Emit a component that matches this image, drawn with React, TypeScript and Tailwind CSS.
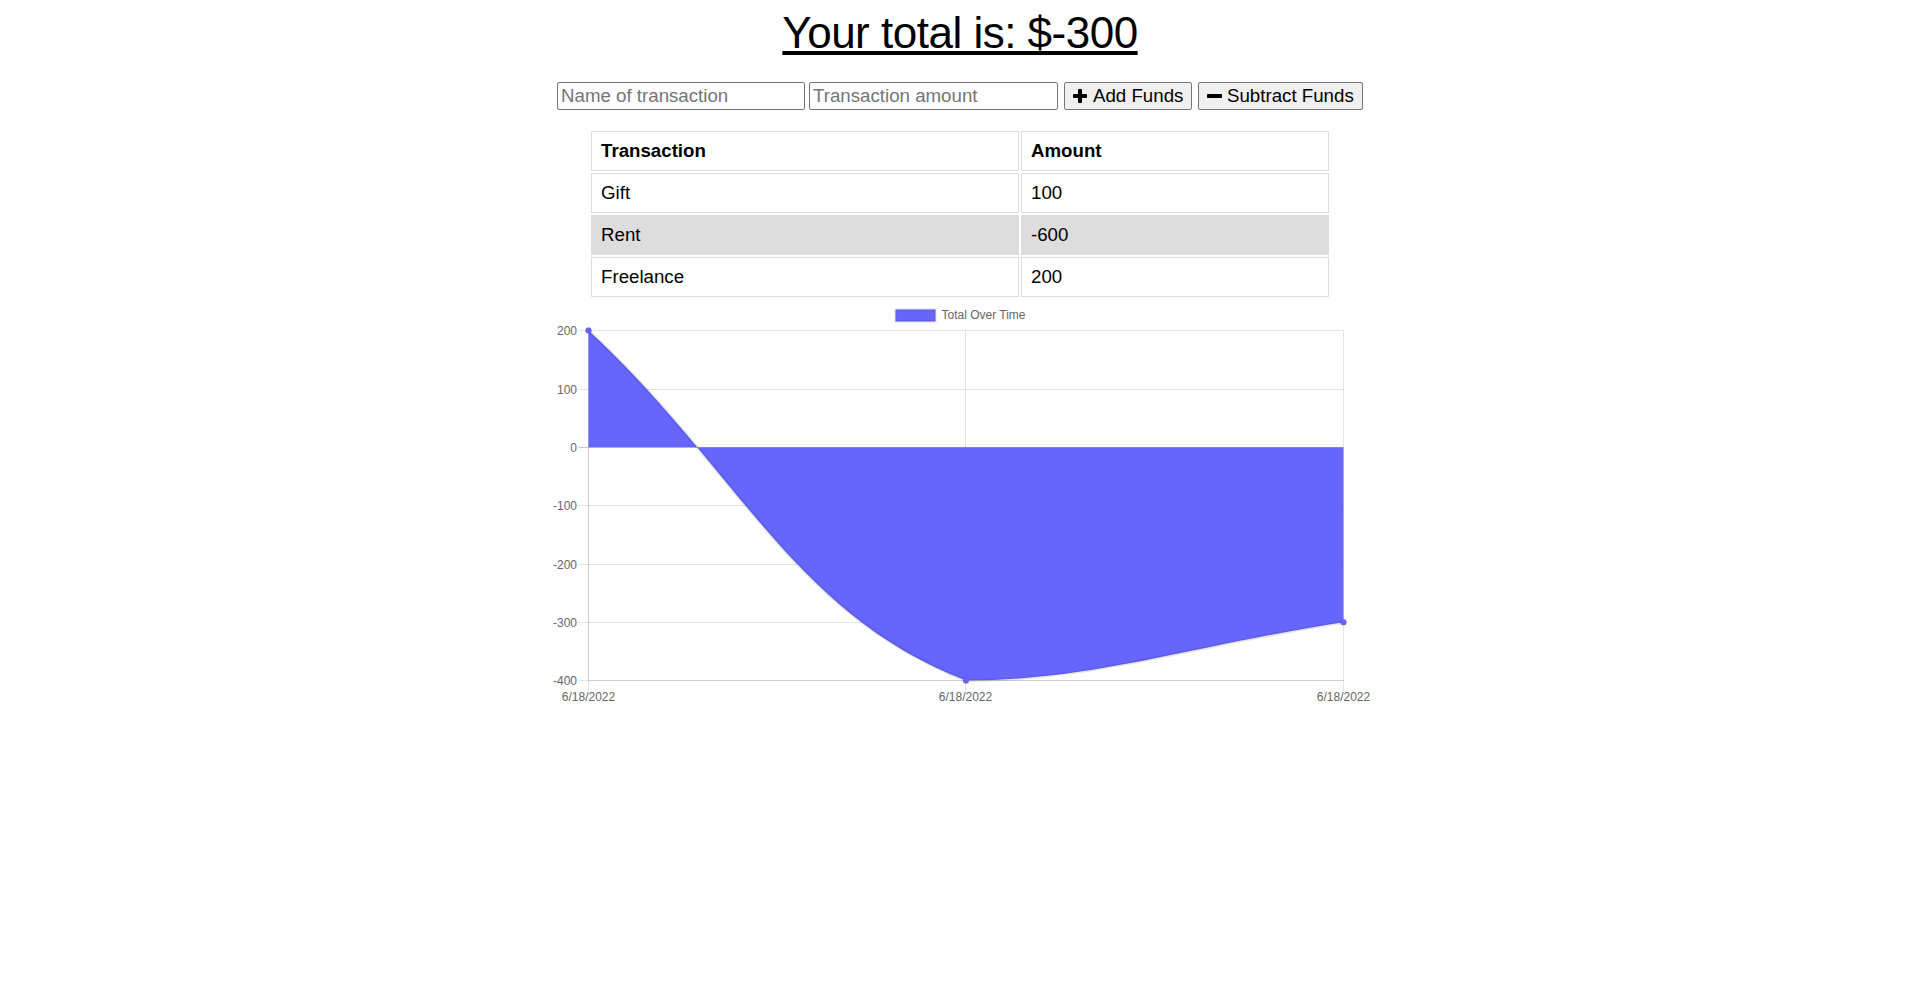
import React from "react";

const FONT = { fontFamily: '"Liberation Sans", Arial, sans-serif' };

function PlusIcon() {
  return (
    <svg width="14" height="14" viewBox="0 0 14 14" className="shrink-0">
      <rect x="5" y="0" width="4" height="14" rx="0.8" fill="#000" />
      <rect x="0" y="5" width="14" height="4" rx="0.8" fill="#000" />
    </svg>
  );
}

function MinusIcon() {
  return (
    <svg width="15" height="14" viewBox="0 0 15 14" className="shrink-0">
      <rect x="0" y="5" width="15" height="4" rx="0.8" fill="#000" />
    </svg>
  );
}

const rows = [
  { name: "Gift", amount: "100", shade: false },
  { name: "Rent", amount: "-600", shade: true },
  { name: "Freelance", amount: "200", shade: false },
];

function Chart() {
  const ys = [30.5, 89.5, 147.5, 205.5, 264.5, 322.5, 380.5];
  const yLabels = ["200", "100", "0", "-100", "-200", "-300", "-400"];
  const xs = [38.5, 415.5, 793.5];
  const grid = "rgba(0,0,0,0.1)";
  const curve =
    "M38.5 30.5 C189.5 170.5 242.62 313.51 416 380.5 C544.62 380.5 642.5 345.52 793.5 322.2";
  const fillPath = curve + " L793.5 147.2 L38.5 147.2 Z";
  return (
    <svg width="820" height="410" viewBox="0 0 820 410" className="block">
      <rect x="345.5" y="9.5" width="40" height="12" fill="#6666ff" stroke="rgba(0,0,0,0.1)" strokeWidth="2" />
      <text x="391.5" y="19.3" fontSize="12" fill="#666" style={FONT}>
        Total Over Time
      </text>
      {ys.map((y, i) => (
        <line
          key={"h" + i}
          x1="28.5"
          x2="793.5"
          y1={y}
          y2={y}
          stroke={i === 2 ? "rgba(0,0,0,0.22)" : grid}
          strokeWidth="1"
        />
      ))}
      {xs.map((x, i) => (
        <line key={"v" + i} x1={x} x2={x} y1="30.5" y2="390.5" stroke={grid} strokeWidth="1" />
      ))}
      <line x1="38.5" x2="38.5" y1="30.5" y2="380.5" stroke={grid} strokeWidth="1" />
      <line x1="38.5" x2="793.5" y1="380.5" y2="380.5" stroke={grid} strokeWidth="1" />
      {ys.map((y, i) => (
        <text
          key={"yl" + i}
          x="27"
          y={y + 4.3}
          fontSize="12"
          fill="#666"
          textAnchor="end"
          style={FONT}
        >
          {yLabels[i]}
        </text>
      ))}
      {xs.map((x, i) => (
        <text
          key={"xl" + i}
          x={x}
          y="400.5"
          fontSize="12"
          fill="#666"
          textAnchor="middle"
          style={FONT}
        >
          6/18/2022
        </text>
      ))}
      <path d={fillPath} fill="#6666ff" />
      <path d={curve} fill="none" stroke="rgba(0,0,0,0.1)" strokeWidth="3" />
      <circle cx="38.5" cy="30.5" r="3" fill="#6666ff" stroke="rgba(0,0,0,0.1)" strokeWidth="1" />
      <circle cx="416" cy="380.5" r="3" fill="#6666ff" stroke="rgba(0,0,0,0.1)" strokeWidth="1" />
      <circle cx="793.5" cy="322.2" r="3" fill="#6666ff" stroke="rgba(0,0,0,0.1)" strokeWidth="1" />
    </svg>
  );
}

export default function App() {
  return (
    <div className="min-h-[1007px] w-full bg-white text-black" style={FONT}>
      <h1 className="mt-[8px] text-center text-[44px] leading-[49px] tracking-[-0.5px] font-normal">
        <span className="underline">Your total is: $-300</span>
      </h1>

      <div className="mt-[25px] flex justify-center items-center h-[28px]">
        <input
          type="text"
          placeholder="Name of transaction"
          className="w-[248px] h-[28px] border border-[#767676] rounded-[2px] px-[3px] text-[18.7px] placeholder:text-[#757575] outline-none"
          style={FONT}
        />
        <input
          type="text"
          placeholder="Transaction amount"
          className="ml-[4px] w-[249px] h-[28px] border border-[#767676] rounded-[2px] px-[3px] text-[18.7px] placeholder:text-[#757575] outline-none"
          style={FONT}
        />
        <button
          className="ml-[6px] w-[128px] h-[28px] flex items-center gap-[6px] pl-[8px] border border-[#767676] rounded-[2px] bg-[#efefef] text-[18.7px] text-black"
          style={FONT}
        >
          <PlusIcon />
          <span>Add Funds</span>
        </button>
        <button
          className="ml-[6px] w-[165px] h-[28px] flex items-center gap-[5px] pl-[8px] border border-[#767676] rounded-[2px] bg-[#efefef] text-[18.7px] text-black"
          style={FONT}
        >
          <MinusIcon />
          <span>Subtract Funds</span>
        </button>
      </div>

      <div className="mt-[21px] mx-auto w-[738px] grid grid-cols-[428px_308px] gap-[2px] text-[18.7px]">
        <div className="h-[40px] border border-[#dddddd] flex items-center px-[9px] font-bold">Transaction</div>
        <div className="h-[40px] border border-[#dddddd] flex items-center px-[9px] font-bold">Amount</div>
        {rows.map((r) => (
          <React.Fragment key={r.name}>
            <div
              className={
                "h-[40px] border border-[#dddddd] flex items-center px-[9px] " +
                (r.shade ? "bg-[#dddddd]" : "bg-white")
              }
            >
              {r.name}
            </div>
            <div
              className={
                "h-[40px] border border-[#dddddd] flex items-center px-[9px] " +
                (r.shade ? "bg-[#dddddd]" : "bg-white")
              }
            >
              {r.amount}
            </div>
          </React.Fragment>
        ))}
      </div>

      <div className="mt-[3px] flex justify-center">
        <Chart />
      </div>
    </div>
  );
}
